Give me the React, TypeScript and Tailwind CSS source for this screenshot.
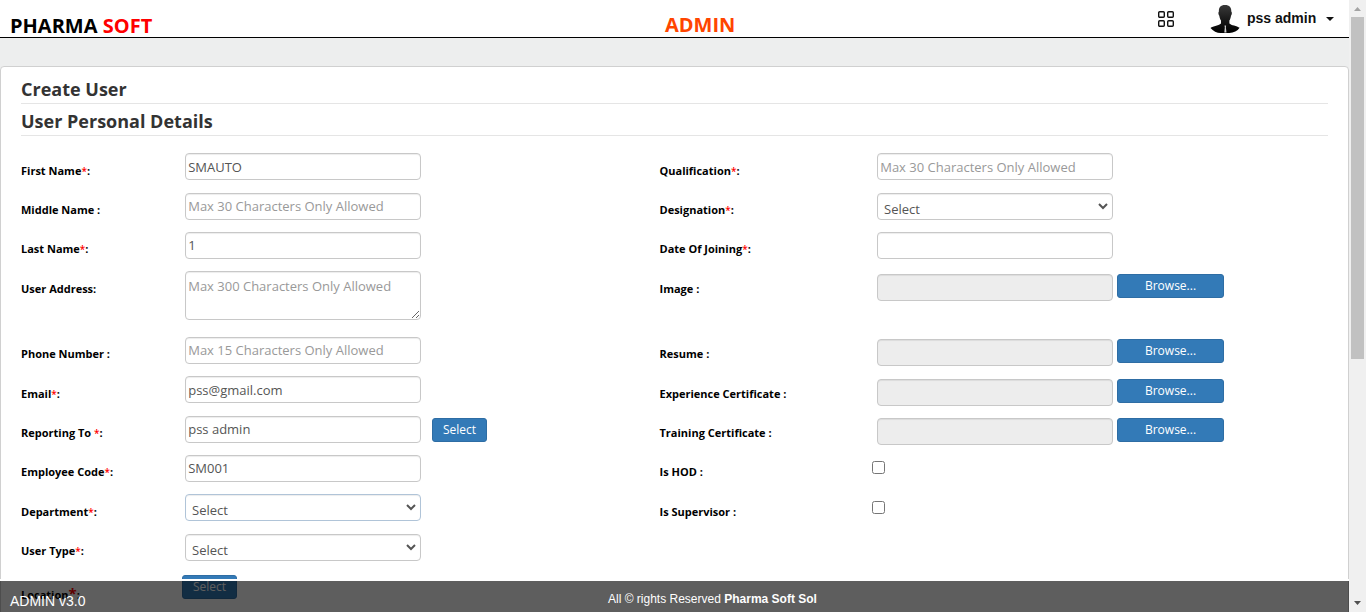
import type { ReactNode } from 'react';

const fieldBox =
  'block w-[236px] rounded-[4px] border border-[#c8c8c8] px-[2.2px] text-[13px] text-[#555] shadow-[inset_0_1px_1px_rgba(0,0,0,0.075)] outline-none placeholder:text-[#999]';

function TextField({ value = '', hint = '', low = false }: { value?: string; hint?: string; low?: boolean }) {
  return <input className={`${fieldBox} h-[27px] bg-white ${low ? 'pt-px' : 'pb-px'}`} defaultValue={value} placeholder={hint} />;
}

function SelectField({ focused = false }: { focused?: boolean }) {
  return (
    <div className="relative w-[236px]">
      <select
        className={`block h-[27px] w-full appearance-none rounded-[4px] border bg-white pt-[5px] pl-[6px] text-[13px] leading-[20px] text-[#555] shadow-[inset_0_1px_1px_rgba(0,0,0,0.075)] outline-none ${
          focused ? 'border-[#b0c4d8]' : 'border-[#c8c8c8]'
        }`}
      >
        <option>Select</option>
      </select>
      <svg className="pointer-events-none absolute top-[10px] right-[5px]" width="10" height="7" viewBox="0 0 10 7" fill="none">
        <path d="M1 1L5 5L9 1" stroke="#555" strokeWidth="2" />
      </svg>
    </div>
  );
}

function FileField() {
  return (
    <div className="flex gap-1">
      <input disabled className={`${fieldBox} h-[27px] bg-[#ededed]`} />
      <button className="h-6 w-[107px] rounded-[3px] border border-[#2e6da4] bg-[#337ab7] pb-px text-[12px] leading-[21px] text-white">Browse...</button>
    </div>
  );
}

function SelectButton() {
  return <button className="block h-6 w-[55px] rounded-[3px] border border-[#2e6da4] bg-[#337ab7] pb-px text-[12px] leading-[21px] text-white">Select</button>;
}

function Check() {
  return <input type="checkbox" className="-ml-[5px] block size-[13px]" />;
}

type CellProps = { label: string; required?: boolean; className?: string; children: ReactNode };

function LeftCell({ label, required, className = '', children }: CellProps) {
  return (
    <div className="flex w-[638.5px]">
      <Label label={label} required={required} className={`w-[164px] ${className}`} />
      {children}
    </div>
  );
}

function RightCell({ label, required, className = '', children }: CellProps) {
  return (
    <div className="flex">
      <Label label={label} required={required} className={`w-[217.5px] ${className}`} />
      {children}
    </div>
  );
}

function Label({ label, required, className }: { label: string; required?: boolean; className: string }) {
  return (
    <label className={`shrink-0 text-[11px] leading-4 font-bold whitespace-pre text-black ${className}`}>
      {label}
      {required && <span className="text-[10px] leading-none font-semibold text-[#f00]">*</span>}:
    </label>
  );
}

function Header() {
  return (
    <header className="flex h-[38px] shrink-0 border-b border-black bg-white">
      <div className="w-[665px] pt-[12px] pl-[10px] text-[20px] leading-[28px] font-bold text-black">
        PHARMA <span className="text-[#f00]">SOFT</span>
      </div>
      <div className="w-[493px] pt-[11px] text-[20px] leading-[28px] font-bold text-[#ff4500]">ADMIN</div>
      <svg className="mt-[11px]" width="16" height="16" viewBox="0 0 16 16" fill="none" stroke="#111" strokeWidth="1.4">
        <rect x="0.7" y="0.7" width="5.6" height="5.6" rx="1" />
        <rect x="9.7" y="0.7" width="5.6" height="5.6" rx="1" />
        <rect x="0.7" y="9.7" width="5.6" height="5.6" rx="1" />
        <rect x="9.7" y="9.7" width="5.6" height="5.6" rx="1" />
      </svg>
      <svg className="mt-[5px] ml-[36px]" width="30" height="28" viewBox="0 0 30 28">
        <defs>
          <linearGradient id="bust" x1="0" y1="0" x2="0" y2="1">
            <stop offset="0" stopColor="#3a3a3a" />
            <stop offset="0.5" stopColor="#1a1a1a" />
            <stop offset="1" stopColor="#000" />
          </linearGradient>
        </defs>
        <path
          d="M15 0C10.500 0 8.600 2.500 8.900 6.500C8.100 7 8.300 10 9.300 10.800C9.600 13 10.300 14.500 11 15.600V18.400C9.500 20.200 3 20.800 0.500 23C3 26 7 28 10.500 28H19.500C23.500 28 27.500 26 29.600 22.800C27 20.700 21 20.200 19.400 18.400V15.600C20.100 14.500 20.700 13 21 10.800C22 10 22.200 7 21.300 6.500C21.500 2.500 19.500 0 15 0Z"
          fill="url(#bust)"
        />
        <path d="M14.500 20.500H16.100L15.900 22.500L16.500 27.500H14.300L14.800 22.500Z" fill="#ccc" />
      </svg>
      <div className="ml-[7px] pt-[8px] font-['Liberation_Sans',sans-serif] text-[14px] leading-[20px] font-bold text-[#111]">pss admin</div>
      <svg className="mt-[17px] ml-[10px]" width="8" height="4" viewBox="0 0 8 4">
        <path d="M0 0H8L4 4Z" fill="#111" />
      </svg>
    </header>
  );
}

function ScrollBar() {
  return (
    <div className="flex h-full w-[17px] shrink-0 flex-col items-center bg-[#f0f0f0]">
      <div className="flex h-[17px] items-center">
        <svg width="7" height="4" viewBox="0 0 7 4"><path d="M0 4H7L3.500 0Z" fill="#a3a3a3" /></svg>
      </div>
      <div className="h-[342px] w-[13px] bg-[#c1c1c1]" />
      <svg className="mt-auto mb-[7px]" width="7" height="4" viewBox="0 0 7 4"><path d="M0 0H7L3.500 4Z" fill="#505050" /></svg>
    </div>
  );
}

export default function App() {
  return (
    <div className="flex h-[612px] w-[1366px] overflow-hidden bg-[#edeeee] font-['Open_Sans',sans-serif]">
      <div className="relative flex w-[1349px] flex-col overflow-hidden">
        <Header />
        <main className="mt-[28px] h-[600px] shrink-0 rounded-t-[4px] border border-[#d0d0d0] bg-white px-[20px]">
          <h1 className="h-[37px] border-b border-[#e5e5e5] pt-[10px] text-[18px] leading-[25px] font-bold text-[#333]">Create User</h1>
          <h2 className="h-[32px] border-b border-[#e5e5e5] pt-[5px] text-[18px] leading-[25px] font-bold text-[#333]">User Personal Details</h2>
          <form className="pt-[17px]">
            <div className="flex h-[40px]">
              <LeftCell label="First Name" required className="pt-[10px]"><TextField low value="SMAUTO" /></LeftCell>
              <RightCell label="Qualification" required className="pt-[10px]"><TextField low hint="Max 30 Characters Only Allowed" /></RightCell>
            </div>
            <div className="flex h-[39px]">
              <LeftCell label="Middle Name " className="pt-[9px]"><TextField hint="Max 30 Characters Only Allowed" /></LeftCell>
              <RightCell label="Designation" required className="pt-[9px]"><SelectField /></RightCell>
            </div>
            <div className="flex h-[39px]">
              <LeftCell label="Last Name" required className="pt-[9px]"><TextField value="1" /></LeftCell>
              <RightCell label="Date Of Joining" required className="pt-[9px]"><TextField /></RightCell>
            </div>
            <div className="flex h-[66px]">
              <LeftCell label="User Address" className="pt-[10px]">
                <textarea className={`${fieldBox} h-[49px] resize bg-white pt-[5px] leading-[19px]`} placeholder="Max 300 Characters Only Allowed" />
              </LeftCell>
              <RightCell label="Image " className="pt-[10px]"><div className="pt-[3px]"><FileField /></div></RightCell>
            </div>
            <div className="flex h-[39px]">
              <LeftCell label="Phone Number " className="pt-[9px]"><TextField hint="Max 15 Characters Only Allowed" /></LeftCell>
              <RightCell label="Resume " className="pt-[9px]"><div className="pt-[2px]"><FileField /></div></RightCell>
            </div>
            <div className="flex h-[40px]">
              <LeftCell label="Email" required className="pt-[10px]"><TextField low value="pss@gmail.com" /></LeftCell>
              <RightCell label="Experience Certificate " className="pt-[10px]"><div className="pt-[3px]"><FileField /></div></RightCell>
            </div>
            <div className="flex h-[39px]">
              <LeftCell label="Reporting To " required className="pt-[9px]">
                <TextField value="pss admin" />
                <div className="pt-[2px] pl-[11px]"><SelectButton /></div>
              </LeftCell>
              <RightCell label="Training Certificate " className="pt-[9px]"><div className="pt-[2px]"><FileField /></div></RightCell>
            </div>
            <div className="flex h-[39px]">
              <LeftCell label="Employee Code" required className="pt-[9px]"><TextField value="SM001" /></LeftCell>
              <RightCell label="Is HOD " className="pt-[9px]"><div className="pt-[6px]"><Check /></div></RightCell>
            </div>
            <div className="flex h-[40px]">
              <LeftCell label="Department" required className="pt-[10px]"><SelectField focused /></LeftCell>
              <RightCell label="Is Supervisor " className="pt-[10px]"><div className="pt-[7px]"><Check /></div></RightCell>
            </div>
            <div className="flex h-[41px]">
              <LeftCell label="User Type" required className="pt-[9px]"><SelectField /></LeftCell>
            </div>
            <div className="flex">
              <div className="w-[161px] pt-[11px] text-[11px] leading-4 font-bold text-black">
                Location<span className="text-[15px] leading-none text-[#f00]">*</span>:
              </div>
              <SelectButton />
            </div>
          </form>
        </main>
        <footer className="absolute inset-x-0 bottom-0 flex h-[33px] border-t-2 border-white bg-black/63 bg-clip-padding font-['Liberation_Sans',sans-serif] text-white">
          <div className="w-[608px] pt-[11px] pl-[10px] text-[14px] leading-[18px]">ADMIN v3.0</div>
          <div className="pt-[10px] text-[12px] leading-4">All © rights Reserved <b>Pharma Soft Sol</b></div>
        </footer>
      </div>
      <ScrollBar />
    </div>
  );
}
